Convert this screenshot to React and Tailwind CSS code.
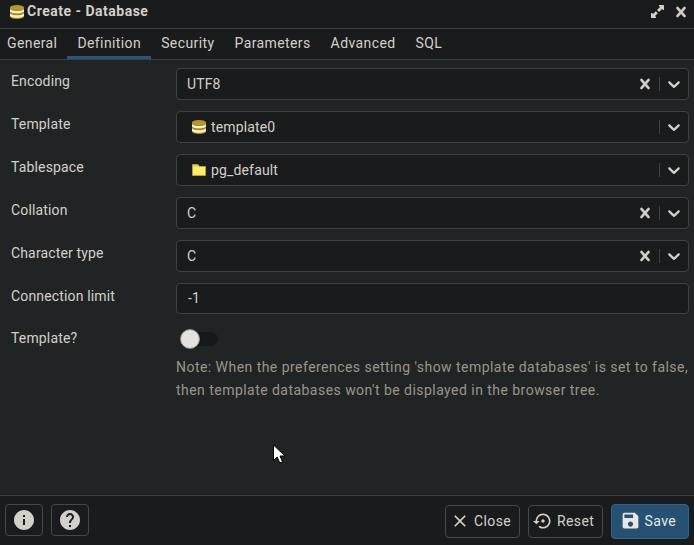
import { useState } from "react";
import { MdClose, MdHelp, MdInfo, MdSave, MdSettingsBackupRestore } from "react-icons/md";

const TABS = ["General", "Definition", "Security", "Parameters", "Advanced", "SQL"];

function DatabaseIcon() {
  return (
    <svg viewBox="0 0 14 14" width="14" height="14" aria-hidden="true">
      <path d="M0 2.500v8.700C0 12.900 3 14 7 14s7-1.100 7-2.800V2.500z" fill="#a8882c" />
      <path d="M0 4.200C1.500 5.500 4 6 7 6s5.500-.5 7-1.800v2.300C12.500 7.800 10 8.300 7 8.300S1.500 7.800 0 6.500z" fill="#fbf5c8" />
      <path d="M0 8.400c1.500 1.300 4 1.800 7 1.800s5.500-.5 7-1.800v2.600c-1.500 1.300-4 1.800-7 1.800s-5.500-.5-7-1.800z" fill="#fbf5c8" />
      <ellipse cx="7" cy="2.600" rx="7" ry="2.600" fill="#b7952f" />
    </svg>
  );
}

function FolderIcon() {
  return (
    <svg viewBox="0 0 14 12" width="14" height="12" aria-hidden="true">
      <path d="M.5 11.500V.5h5.500l1.500 2h6v9z" fill="#f7ee72" stroke="#c29a2a" />
      <path d="M1 1h4.800l1.200 1.800H1z" fill="#e8cf4e" />
    </svg>
  );
}

function ExpandIcon() {
  return (
    <svg viewBox="0 0 13 13" width="13" height="13" fill="currentColor" aria-hidden="true">
      <path d="M8 0h4.500q.5 0 .5.5V5h-1l-1-1-3 3-2-2 3-3-1-1z" />
      <path d="M5 13H.5Q0 13 0 12.500V8h1l1 1 2.800-2.800 2 2L4 11l1 1z" />
    </svg>
  );
}

function CrossIcon() {
  return (
    <svg viewBox="0 0 20 20" width="20" height="20" fill="currentColor" stroke="currentColor" strokeWidth="0.4" aria-hidden="true">
      <path d="M14.348 14.849c-0.469 0.469-1.229 0.469-1.697 0l-2.651-3.030-2.651 3.029c-0.469 0.469-1.229 0.469-1.697 0-0.469-0.469-0.469-1.229 0-1.697l2.758-3.150-2.759-3.152c-0.469-0.469-0.469-1.228 0-1.697s1.228-0.469 1.697 0l2.652 3.031 2.651-3.031c0.469-0.469 1.228-0.469 1.697 0s0.469 1.229 0 1.697l-2.758 3.152 2.758 3.150c0.469 0.469 0.469 1.229 0 1.698z" />
    </svg>
  );
}

function ChevronIcon() {
  return (
    <svg viewBox="0 0 20 20" width="20" height="20" fill="currentColor" aria-hidden="true">
      <path d="M4.516 7.548c0.436-0.446 1.043-0.481 1.576 0l3.908 3.747 3.908-3.747c0.533-0.481 1.141-0.446 1.574 0 0.436 0.445 0.408 1.197 0 1.615-0.406 0.418-4.695 4.502-4.695 4.502-0.217 0.223-0.502 0.335-0.787 0.335s-0.570-0.112-0.789-0.335c0 0-4.287-4.084-4.695-4.502s-0.436-1.170 0-1.615z" />
    </svg>
  );
}

function Field({ label, children }) {
  return (
    <div className="flex items-start">
      <label className="w-[165px] shrink-0 pt-[3px] leading-5">{label}</label>
      <div className="min-w-0 flex-1">{children}</div>
    </div>
  );
}

function SelectBox({ value, icon, clearable }) {
  return (
    <div className="flex h-8 items-center rounded border border-[#3c4243] bg-[#1a1b1d] pr-1 pl-2.5">
      {icon ? <span className="mr-[5px] ml-[5px]">{icon}</span> : null}
      <span className="flex-1 leading-5">{value}</span>
      {clearable ? (
        <button type="button" className="mr-1" aria-label="Clear">
          <CrossIcon />
        </button>
      ) : null}
      <span className="mr-1 h-3.5 w-px bg-[#3c4243]" />
      <button type="button" aria-label="Open">
        <ChevronIcon />
      </button>
    </div>
  );
}

function App() {
  const [activeTab, setActiveTab] = useState("Definition");
  const [isTemplate, setIsTemplate] = useState(false);

  return (
    <div className="relative flex h-[545px] w-[694px] flex-col overflow-hidden bg-[#212425] font-['Roboto',sans-serif] text-sm tracking-[0.15px] text-[#d4d0c8]">
      <header className="flex h-[29px] shrink-0 items-center border-b border-[#3c4041] bg-[#1a1b1d] pr-[3px] pb-[5px] pl-2.5">
        <DatabaseIcon />
        <h1 className="ml-[3px] flex-1 pb-0.5 leading-5 font-bold tracking-[0.5px]">Create - Database</h1>
        <button type="button" className="mr-[7px]" aria-label="Maximize">
          <ExpandIcon />
        </button>
        <button type="button" aria-label="Close dialog">
          <CrossIcon />
        </button>
      </header>

      <nav className="-ml-[3px] flex h-[31px] shrink-0 border-b border-[#3c4041] bg-[#1a1b1d]">
        {TABS.map((tab) => (
          <button
            key={tab}
            type="button"
            onClick={() => setActiveTab(tab)}
            className={
              tab === activeTab
                ? "border-b-[3px] border-[#29557a] px-2.5 pt-px leading-[22px] tracking-[0.4px]"
                : "border-b-[3px] border-transparent px-2.5 pt-px leading-[22px] tracking-[0.4px]"
            }
          >
            {tab}
          </button>
        ))}
      </nav>

      <main className="flex flex-1 flex-col gap-[11px] pt-2 pr-[5px] pl-[11px]">
        <Field label="Encoding">
          <SelectBox value="UTF8" clearable />
        </Field>
        <Field label="Template">
          <SelectBox value="template0" icon={<DatabaseIcon />} />
        </Field>
        <Field label="Tablespace">
          <SelectBox value="pg_default" icon={<FolderIcon />} />
        </Field>
        <Field label="Collation">
          <SelectBox value="C" clearable />
        </Field>
        <Field label="Character type">
          <SelectBox value="C" clearable />
        </Field>
        <Field label="Connection limit">
          <input
            defaultValue="-1"
            className="block h-[31px] w-full rounded border border-[#3c4243] bg-[#1a1b1d] px-[11px] pb-0.5 tracking-[0.15px] outline-none"
          />
        </Field>
        <Field label="Template?">
          <button
            type="button"
            role="switch"
            aria-checked={isTemplate}
            aria-label="Template?"
            onClick={() => setIsTemplate(!isTemplate)}
            className="mt-1 ml-1 flex h-5 w-[38px] items-center"
          >
            <span className="ml-[3px] flex h-3.5 w-[35px] items-center rounded-full bg-[#17181a]">
              <span
                className={
                  isTemplate
                    ? "ml-[15px] size-5 shrink-0 rounded-full bg-[#e4e2de] shadow"
                    : "-ml-[3px] size-5 shrink-0 rounded-full border border-[#8a8a88] bg-[#e4e2de] shadow"
                }
              />
            </span>
          </button>
          <p className="mt-[7px] leading-[23px] tracking-[0.46px] whitespace-nowrap text-[#9d958a]">
            Note: When the preferences setting 'show template databases' is set to false,
            <br />
            then template databases won't be displayed in the browser tree.
          </p>
        </Field>
      </main>

      <footer className="flex h-[50px] shrink-0 items-start border-t border-[#3c4041] bg-[#1a1b1d] px-[5px] pt-2 tracking-[0.4px]">
        <button type="button" className="mr-2 flex h-8 w-[38px] items-center justify-center rounded border border-[#45494a]" aria-label="Info">
          <MdInfo size={24} />
        </button>
        <button type="button" className="flex h-8 w-[38px] items-center justify-center rounded border border-[#45494a]" aria-label="Help">
          <MdHelp size={24} />
        </button>
        <div className="ml-auto flex gap-2">
          <button type="button" className="mt-px flex h-[33px] w-[75px] items-center rounded border border-[#45494a] pb-px pl-1">
            <MdClose size={20} />
            <span className="ml-1 pb-px">Close</span>
          </button>
          <button type="button" className="mt-px flex h-[33px] w-[75px] items-center rounded border border-[#45494a] pb-px pl-1">
            <MdSettingsBackupRestore size={20} />
            <span className="ml-1 pb-px">Reset</span>
          </button>
          <button type="button" className="flex h-[35px] w-[78px] items-center rounded border border-[#2f6590] bg-[#265173] pb-0.5 pl-2 text-[#e8e6e2]">
            <MdSave size={21} />
            <span className="ml-[3.5px]">Save</span>
          </button>
        </div>
      </footer>

      {/* mouse pointer */}
      <svg className="pointer-events-none absolute top-[444px] left-[273px]" width="13" height="20" viewBox="0 0 13 20">
        <path d="M.5 1v15.500l3.700-3.500 2.600 5.900 2.700-1.200L7 12h5z" fill="#fff" stroke="#000" />
      </svg>
    </div>
  );
}

export default App;
